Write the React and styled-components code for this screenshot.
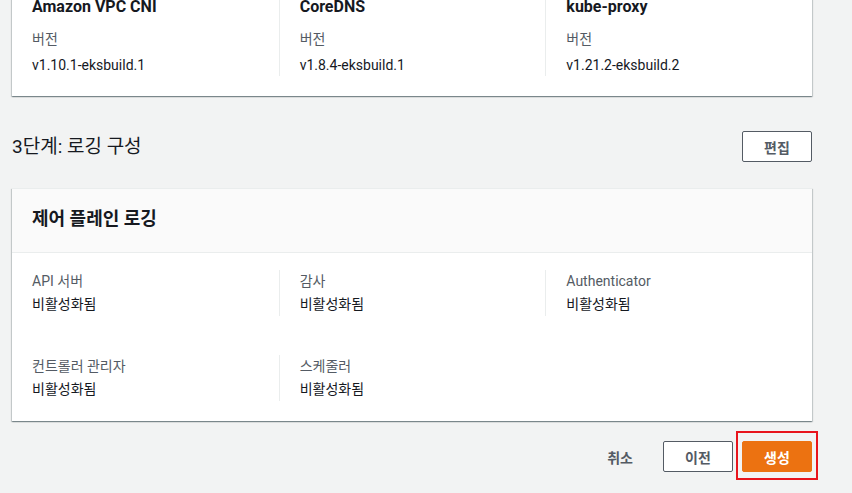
import React from 'react'
import styled, { createGlobalStyle } from 'styled-components'

const GlobalStyle = createGlobalStyle`
  html {
    overflow: hidden;
    background: #f2f3f3;
  }
  body {
    margin: 0;
    padding: 0;
    font-family: Roboto, "Noto Sans CJK KR", sans-serif;
    font-size: 14px;
    color: #16191f;
  }
`

const Page = styled.div`
  width: 800px;
  padding: 0 40px 20px 12px;
  margin-top: -5px;
`

const Card = styled.div`
  background: #ffffff;
  border-top: 1px solid #eaeded;
  box-shadow: 0 1px 1px 0 rgba(0, 28, 36, 0.3), 1px 1px 1px 0 rgba(0, 28, 36, 0.15),
    -1px 1px 1px 0 rgba(0, 28, 36, 0.15);
  margin-top: ${(p) => p.$top || 0}px;
`

const CardHeader = styled.div`
  background: #fafafa;
  border-bottom: 1px solid #eaeded;
  padding: 18px 20px 21px;
  font-size: 18px;
  line-height: 24px;
  font-weight: 700;
`

const CardBody = styled.div`
  padding: ${(p) => p.$pad || '17px 0 20px'};
  display: flex;
  flex-direction: column;
  gap: 39px;
`

const Columns = styled.div`
  display: grid;
  grid-template-columns: repeat(3, 1fr);
`

const Column = styled.div`
  padding: 0 20px;
  border-left: ${(p) => (p.$first || p.$empty ? 'none' : '1px solid #eaeded')};
  display: flex;
  flex-direction: column;
`

const AddonName = styled.div`
  font-size: 16px;
  font-weight: 700;
  line-height: 22px;
  margin-bottom: 10px;
`

const Label = styled.div`
  color: #545b64;
  line-height: ${(p) => p.$lh || 23}px;
`

const Value = styled.div`
  line-height: ${(p) => p.$lh || 23}px;
  margin-top: ${(p) => p.$gap || 0}px;
`

const SectionRow = styled.div`
  display: flex;
  align-items: center;
  justify-content: space-between;
  margin-top: 35px;
`

const SectionTitle = styled.h2`
  margin: 0;
  font-size: 19px;
  font-weight: 400;
  line-height: 26px;
`

const Button = styled.button`
  position: relative;
  width: 70px;
  height: 31px;
  border-radius: 2px;
  border: 1px solid ${(p) => (p.$primary ? '#ec7211' : '#545b64')};
  background: ${(p) => (p.$primary ? '#ec7211' : '#ffffff')};
  color: ${(p) => (p.$primary ? '#ffffff' : '#545b64')};
  font-family: inherit;
  font-size: 14px;
  font-weight: 700;
  cursor: pointer;
  padding: 0;

  ${(p) =>
    p.$highlight &&
    `
    &::after {
      content: '';
      position: absolute;
      top: -11px;
      left: -7px;
      right: -7px;
      bottom: -9px;
      border: 2px solid #e8141c;
      pointer-events: none;
    }
  `}
`

const LinkButton = styled.button`
  background: none;
  border: none;
  height: 31px;
  padding: 0 21px 0 20px;
  font-family: inherit;
  font-size: 14px;
  font-weight: 700;
  color: #545b64;
  cursor: pointer;
`

const Footer = styled.div`
  display: flex;
  justify-content: flex-end;
  align-items: center;
  gap: 9px;
  margin-top: 20px;
`

const addons = [
  { name: 'Amazon VPC CNI', version: 'v1.10.1-eksbuild.1' },
  { name: 'CoreDNS', version: 'v1.8.4-eksbuild.1' },
  { name: 'kube-proxy', version: 'v1.21.2-eksbuild.2' },
]

const logRows = [
  [
    { label: 'API 서버', value: '비활성화됨' },
    { label: '감사', value: '비활성화됨' },
    { label: 'Authenticator', value: '비활성화됨' },
  ],
  [
    { label: '컨트롤러 관리자', value: '비활성화됨' },
    { label: '스케줄러', value: '비활성화됨' },
    null,
  ],
]

export default function App() {
  return (
    <>
      <GlobalStyle />
      <Page>
        <Card>
          <CardBody $pad="0 0 20px">
            <Columns>
              {addons.map((a, i) => (
                <Column key={a.name} $first={i === 0}>
                  <AddonName>{a.name}</AddonName>
                  <Label $lh={22}>버전</Label>
                  <Value $lh={22} $gap={4}>
                    {a.version}
                  </Value>
                </Column>
              ))}
            </Columns>
          </CardBody>
        </Card>

        <SectionRow>
          <SectionTitle>3단계: 로깅 구성</SectionTitle>
          <Button>편집</Button>
        </SectionRow>

        <Card $top={26}>
          <CardHeader>제어 플레인 로깅</CardHeader>
          <CardBody>
            {logRows.map((row, r) => (
              <Columns key={r}>
                {row.map((item, i) =>
                  item ? (
                    <Column key={i} $first={i === 0}>
                      <Label>{item.label}</Label>
                      <Value>{item.value}</Value>
                    </Column>
                  ) : (
                    <Column key={i} $empty />
                  )
                )}
              </Columns>
            ))}
          </CardBody>
        </Card>

        <Footer>
          <LinkButton>취소</LinkButton>
          <Button>이전</Button>
          <Button $primary $highlight>
            생성
          </Button>
        </Footer>
      </Page>
    </>
  )
}
